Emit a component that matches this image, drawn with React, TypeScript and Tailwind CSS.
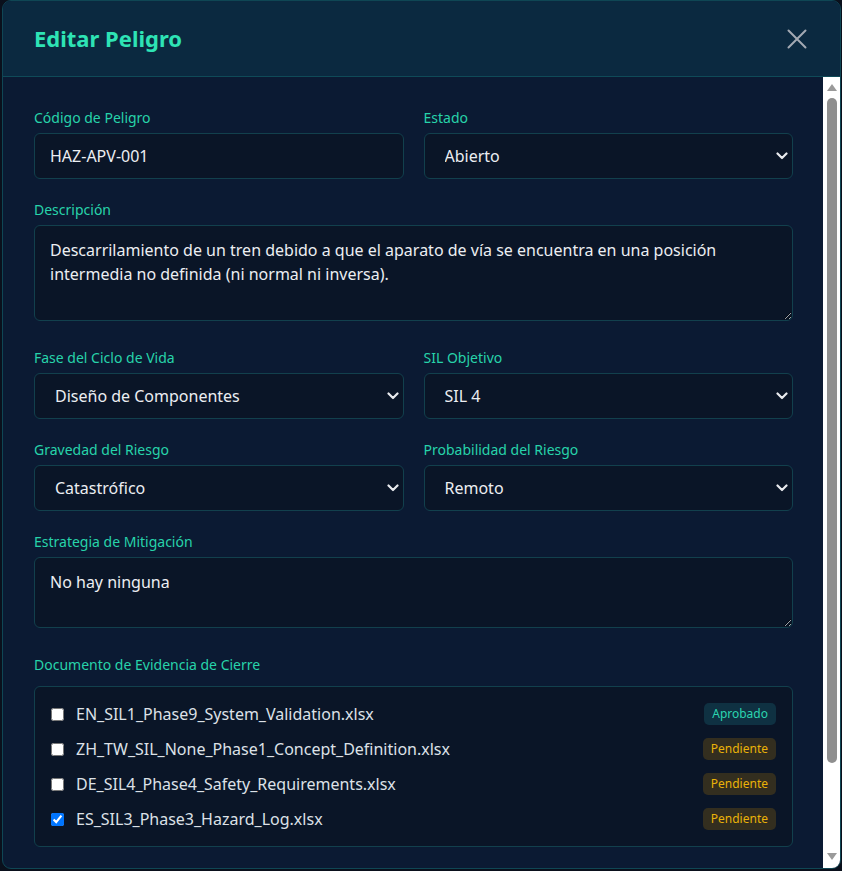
import React from "react";

const FONT = { fontFamily: '"Noto Sans", "Open Sans", sans-serif' };

function Label({ children, className = "" }: { children: React.ReactNode; className?: string }) {
  return <div className={"h-5 text-[14px] leading-5 text-[#27d3aa] " + className}>{children}</div>;
}

function Chevron() {
  return (
    <svg className="pointer-events-none absolute right-[5px] top-1/2 -translate-y-1/2" width="12" height="8" viewBox="0 0 12 8">
      <polyline points="1.5,1.5 6,6 10.5,1.5" fill="none" stroke="#e8eaee" strokeWidth="2.2" strokeLinecap="round" strokeLinejoin="round" />
    </svg>
  );
}

function SelectBox({ value }: { value: string }) {
  return (
    <div className="relative">
      <select
        defaultValue={value}
        className="block h-[46px] w-full appearance-none rounded-[6px] border border-[#12404d] bg-[#0a1527] pl-5 pr-8 text-[16px] text-[#eceef2] outline-none"
        style={FONT}
      >
        <option>{value}</option>
      </select>
      <Chevron />
    </div>
  );
}

function Badge({ kind }: { kind: "ok" | "pending" }) {
  return kind === "ok" ? (
    <span className="flex h-[22px] items-center rounded-[5px] bg-[#0f3142] px-2 text-[12px] text-[#2bd4b0]">Aprobado</span>
  ) : (
    <span className="flex h-[22px] items-center rounded-[5px] bg-[#332e1f] px-2 text-[12px] text-[#eab208]">Pendiente</span>
  );
}

const docs: { name: string; kind: "ok" | "pending"; checked: boolean }[] = [
  { name: "EN_SIL1_Phase9_System_Validation.xlsx", kind: "ok", checked: false },
  { name: "ZH_TW_SIL_None_Phase1_Concept_Definition.xlsx", kind: "pending", checked: false },
  { name: "DE_SIL4_Phase4_Safety_Requirements.xlsx", kind: "pending", checked: false },
  { name: "ES_SIL3_Phase3_Hazard_Log.xlsx", kind: "pending", checked: true },
];

export default function App() {
  return (
    <div className="h-[871px] w-[842px] overflow-hidden bg-[#0a101c]" style={FONT}>
      <div className="ml-[2px] flex h-[869px] w-[839px] flex-col overflow-hidden rounded-[9px] border border-[#0f4654] bg-[#0b1a33]">
        <div className="flex h-[76px] shrink-0 items-center justify-between border-b border-[#0f4a58] bg-[#0b2940] pl-[31px] pr-[33px]">
          <h2 className="text-[22px] font-bold text-[#2ee3b5]">Editar Peligro</h2>
          <svg width="20" height="20" viewBox="0 0 20 20">
            <path d="M1.5 1.5 L18.5 18.5 M18.5 1.5 L1.5 18.5" stroke="#a3a9b3" strokeWidth="2" strokeLinecap="round" />
          </svg>
        </div>
        <div className="flex min-h-0 flex-1">
          <div className="min-w-0 flex-1 overflow-hidden pl-[31px] pr-[30px] pt-[31px]">
            <div className="grid grid-cols-2 gap-x-5">
              <div>
                <Label className="mb-[5px]">Código de Peligro</Label>
                <input
                  defaultValue="HAZ-APV-001"
                  className="block h-[46px] w-full rounded-[6px] border border-[#12404d] bg-[#0a1527] px-[15px] text-[16px] text-[#eceef2] outline-none"
                  style={FONT}
                />
              </div>
              <div>
                <Label className="mb-[5px]">Estado</Label>
                <SelectBox value="Abierto" />
              </div>
            </div>

            <div className="mt-[21px]">
              <Label className="mb-[5px]">Descripción</Label>
              <textarea
                defaultValue="Descarrilamiento de un tren debido a que el aparato de vía se encuentra en una posición intermedia no definida (ni normal ni inversa)."
                className="block h-[96px] w-full rounded-[6px] border border-[#12404d] bg-[#0a1527] px-[15px] py-[12px] text-[16px] leading-6 text-[#eceef2] outline-none"
                style={FONT}
              />
            </div>

            <div className="mt-[27px] grid grid-cols-2 gap-x-5">
              <div>
                <Label className="mb-[5px]">Fase del Ciclo de Vida</Label>
                <SelectBox value="Diseño de Componentes" />
              </div>
              <div>
                <Label className="mb-[5px]">SIL Objetivo</Label>
                <SelectBox value="SIL 4" />
              </div>
            </div>

            <div className="mt-[21px] grid grid-cols-2 gap-x-5">
              <div>
                <Label className="mb-[5px]">Gravedad del Riesgo</Label>
                <SelectBox value="Catastrófico" />
              </div>
              <div>
                <Label className="mb-[5px]">Probabilidad del Riesgo</Label>
                <SelectBox value="Remoto" />
              </div>
            </div>

            <div className="mt-[21px]">
              <Label className="mb-[5px]">Estrategia de Mitigación</Label>
              <textarea
                defaultValue="No hay ninguna"
                className="block h-[71px] w-full rounded-[6px] border border-[#12404d] bg-[#0a1527] px-[15px] py-[12px] text-[16px] leading-6 text-[#eceef2] outline-none"
                style={FONT}
              />
            </div>

            <div className="mt-[27px]">
              <Label className="mb-[11px]">Documento de Evidencia de Cierre</Label>
              <div className="flex flex-col gap-[13px] rounded-[6px] border border-[#12404d] bg-[#0a1527] p-4">
                {docs.map((d) => (
                  <div key={d.name} className="flex h-[22px] items-center justify-between">
                    <label className="flex items-center gap-[12px] text-[16px] text-[#dde1e7]">
                      <input type="checkbox" defaultChecked={d.checked} className="m-0 h-[13px] w-[13px] accent-[#0075ff]" />
                      <span>{d.name}</span>
                    </label>
                    <Badge kind={d.kind} />
                  </div>
                ))}
              </div>
            </div>
          </div>

          <div className="flex w-[17px] shrink-0 flex-col bg-white">
            <div className="flex h-[17px] items-end justify-center pb-[3px]">
              <svg width="10" height="7" viewBox="0 0 10 7">
                <polygon points="5,0 10,7 0,7" fill="#9a9a9a" />
              </svg>
            </div>
            <div className="flex-1 pt-[4px]">
              <div className="ml-[4px] h-[665px] w-[10px] rounded-full bg-[#8f8f8f]" />
            </div>
            <div className="flex h-[17px] items-start justify-center pt-[2px] pb-[5px]">
              <svg width="10" height="7" viewBox="0 0 10 7">
                <polygon points="0,0 10,0 5,7" fill="#9a9a9a" />
              </svg>
            </div>
          </div>
        </div>
      </div>
    </div>
  );
}
